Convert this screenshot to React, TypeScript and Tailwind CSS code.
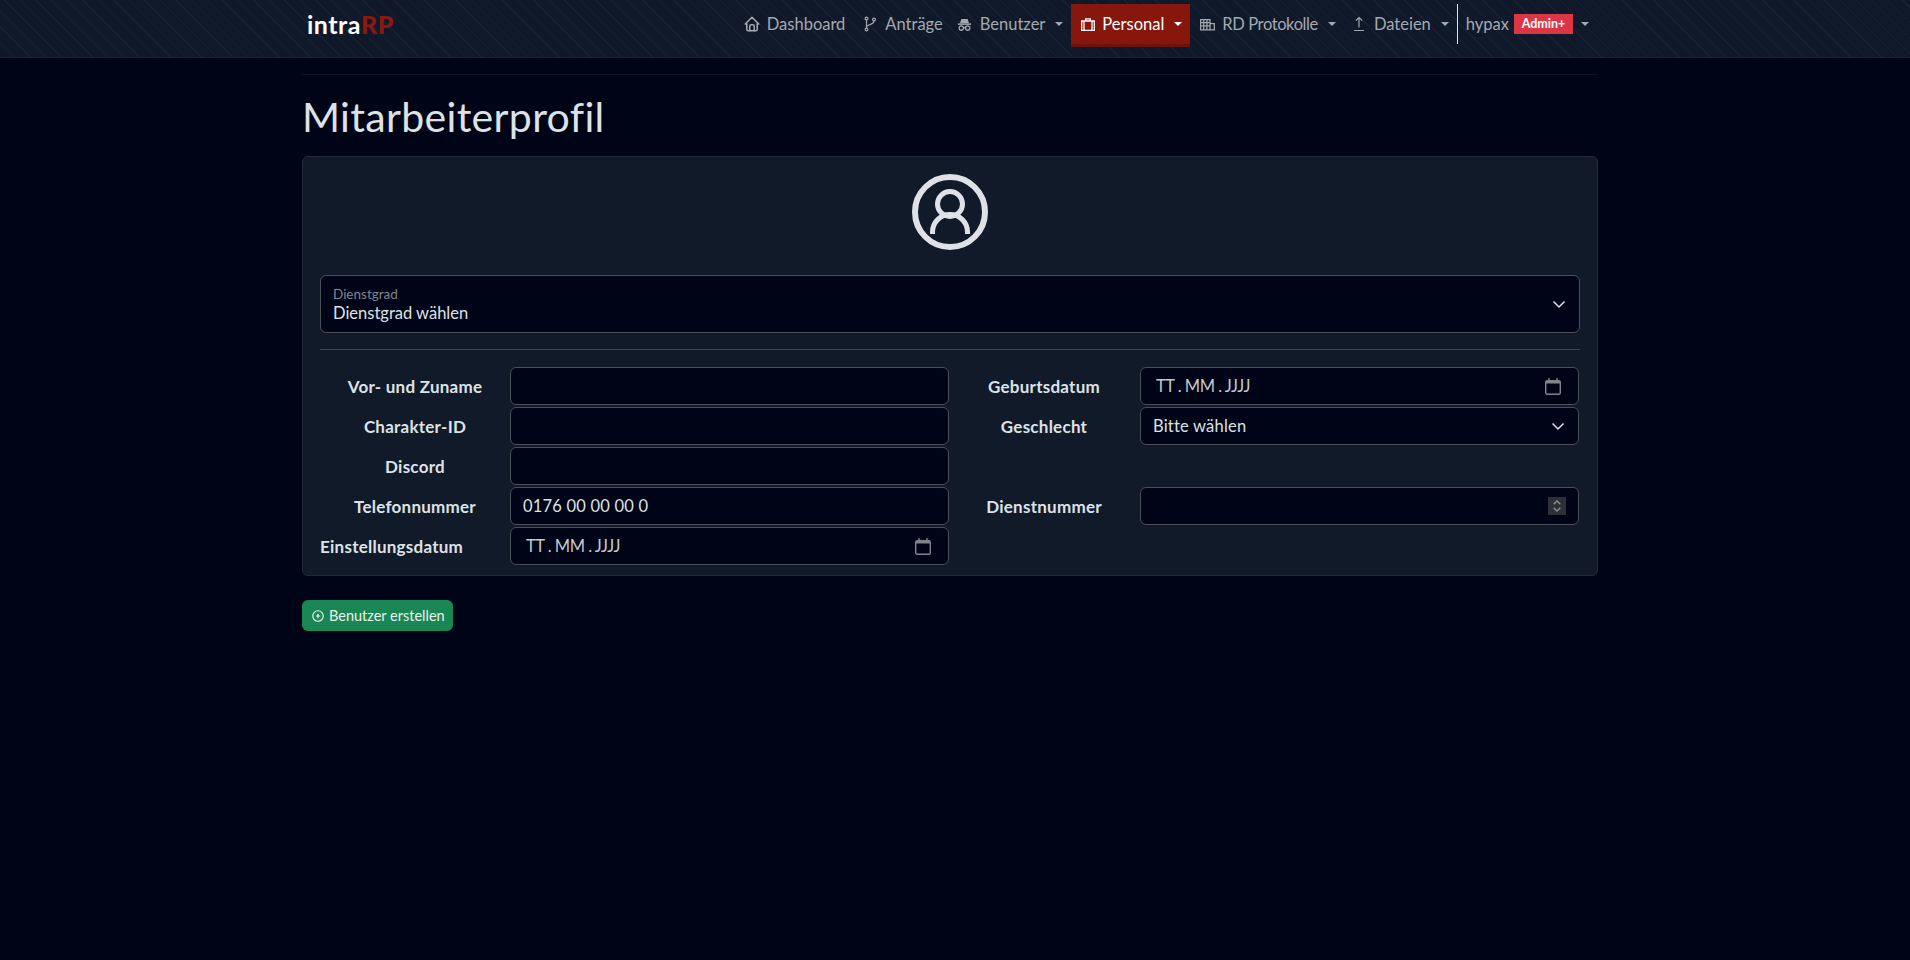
import { TbCirclePlus, TbHome } from "react-icons/tb";
import type { ReactNode } from "react";

function Caret({ white, className }: { white?: boolean; className?: string }) {
  return (
    <span
      className={`h-0 w-0 border-x-[4px] border-t-[4px] border-x-transparent ${className ?? "ml-[10px]"} ${white ? "border-t-white" : "border-t-[#a3a9b1]"}`}
    />
  );
}

function NavItem({ icon, label, caret, className, labelClass }: { icon: ReactNode; label: string; caret?: boolean; className?: string; labelClass?: string }) {
  return (
    <a className={`flex h-[40px] items-center text-[#a3a9b1] ${className ?? ""}`}>
      <span className="mr-[6px] flex w-[18px] justify-center text-[18px]">{icon}</span>
      <span className={labelClass}>{label}</span>
      {caret && <Caret />}
    </a>
  );
}

function BranchIcon() {
  return (
    <svg viewBox="0 0 16 16" className="h-[16px] w-[16px]" fill="none" stroke="currentColor" strokeWidth="1.2">
      <circle cx="4.5" cy="2.5" r="1.4" />
      <circle cx="4.5" cy="13.5" r="1.4" />
      <circle cx="12" cy="3.5" r="1.4" />
      <path d="M4.5 4v8M12 5c0 3.5-5 3-7.5 5.5" />
    </svg>
  );
}

function SpyIcon() {
  return (
    <svg viewBox="0 0 16 16" className="h-[15px] w-[15px]" fill="none" stroke="currentColor" strokeWidth="1.4">
      <path d="M3.2 6.6 4.6 2h6.8l1.4 4.6z" fill="currentColor" stroke="none" />
      <path d="M1 7.6h14" strokeWidth="1.6" />
      <circle cx="4.6" cy="11.8" r="2.3" />
      <circle cx="11.4" cy="11.8" r="2.3" />
      <path d="M6.9 11.5h2.2" />
    </svg>
  );
}

function SuitcaseIcon() {
  return (
    <svg viewBox="0 0 14 13" className="mr-[7px] h-[13px] w-[14px]" fill="none" stroke="currentColor" strokeWidth="1.3">
      <path d="M.7 3h12.6v9.3H.7zM3 3v9.3M11 3v9.3M4.7 3V.8h4.6V3" />
    </svg>
  );
}

function ProtocolIcon() {
  return (
    <svg viewBox="0 0 16 13" className="h-[13px] w-[15px]" fill="none" stroke="currentColor" strokeWidth="1.3">
      <path d="M.7 1.2h10v11h-10zM.7 4.5h10M.7 8h10M4 1.2v11M7.4 1.2v11M10.7 5.5h4.6v6.7h-4.6" />
    </svg>
  );
}

function UploadIcon() {
  return (
    <svg viewBox="0 0 16 16" className="h-[16px] w-[16px]" fill="none" stroke="currentColor" strokeWidth="1.2">
      <path d="M8 1.5v10M4.8 4.7 8 1.5l3.2 3.2M3 14.5h10" />
    </svg>
  );
}

function Chevron() {
  return (
    <svg viewBox="0 0 16 16" className="h-[16px] w-[16px]" fill="none" stroke="currentColor" strokeWidth="1.5">
      <path d="m2.5 5.5 5.5 5.5 5.5-5.5" />
    </svg>
  );
}

function CalendarIcon() {
  return (
    <svg viewBox="0 0 16 17" className="h-[17px] w-[16px] text-[#80858c]" fill="none" stroke="currentColor" strokeWidth="1.4">
      <rect x="0.7" y="2.7" width="14.6" height="13.6" rx="1.5" />
      <path d="M4 0v3M12 0v3" />
      <path d="M1 4.2h14" strokeWidth="2.6" />
    </svg>
  );
}

function UserCircleIcon() {
  return (
    <svg viewBox="0 0 76 76" className="h-[76px] w-[76px] text-[#dee2e6]" fill="none" stroke="currentColor">
      <circle cx="38" cy="38" r="35" strokeWidth="6" />
      <circle cx="38" cy="30" r="12.5" strokeWidth="5" />
      <path d="M20.5 60v-2a17.5 17.5 0 0 1 35 0v2" strokeWidth="5" />
    </svg>
  );
}

function Navbar() {
  return (
    <nav className="h-[58px] border-b border-[#1b2433] bg-[#101929] bg-[repeating-linear-gradient(45deg,transparent,transparent_10px,#182130_10px,#182130_11px)]">
      <div className="w-[1900px]">
        <div className="mx-auto flex h-[57px] w-[1296px] items-start justify-between">
          <div className="ml-[5px] mt-[12px] text-[25px] font-bold leading-none tracking-[0.5px] text-white">
            intra<span className="font-black text-[#8a1a10]">RP</span>
          </div>
          <div className="mr-[9px] flex items-start pt-[4px] text-[16.5px]">
            <NavItem icon={<TbHome />} label="Dashboard" className="mr-[16px]" />
            <NavItem icon={<BranchIcon />} label="Anträge" className="mr-[13px]" />
            <NavItem icon={<SpyIcon />} label="Benutzer" caret className="mr-[8px]" />
            <a className="flex h-[43px] w-[119px] items-center border-b-[3px] border-[#6e130b] bg-[#87170d] pl-[10px] text-white">
              <SuitcaseIcon />
              <span>Personal</span>
              <Caret white />
            </a>
            <NavItem icon={<ProtocolIcon />} label="RD Protokolle" labelClass="tracking-[-0.4px]" caret className="ml-[8px] mr-[14px]" />
            <NavItem icon={<UploadIcon />} label="Dateien" caret className="mr-[8px]" />
            <div className="flex h-[40px] items-center border-l border-[#dee2e6] pl-[8px] text-[#a3a9b1]">
              hypax
              <span className="ml-[5px] flex h-[20px] w-[59px] items-center justify-center bg-[#dc3545] text-[12.5px] font-bold text-white">Admin+</span>
              <Caret className="ml-[8px]" />
            </div>
          </div>
        </div>
      </div>
    </nav>
  );
}

const inputCls =
  "flex h-[38px] w-[439px] items-center rounded-[6px] border border-[#495057] bg-[#000417] text-[16.5px] tracking-[0.2px] text-[#dee2e6]";

const labelCls = "shrink-0 whitespace-nowrap pt-[1px] text-[17px] font-bold tracking-[0.25px] text-[#dee2e6]";

function Field({ label, left, children }: { label: string; left?: boolean; children: ReactNode }) {
  return (
    <div className="flex h-[38px] items-center">
      <label className={`${labelCls} w-[190px] ${left ? "text-left" : "text-center"}`}>{label}</label>
      {children}
    </div>
  );
}

function RightField({ label, children }: { label: string; children: ReactNode }) {
  return (
    <div className="ml-[-2px] flex h-[38px] items-center">
      <label className={`${labelCls} w-[192px] text-center`}>{label}</label>
      {children}
    </div>
  );
}

function DateBox() {
  return (
    <div className={`${inputCls} justify-between pl-[15px] pr-[17px]`}>
      <span className="tracking-[-0.5px] text-[#c5c9cd]">TT . MM . JJJJ</span>
      <CalendarIcon />
    </div>
  );
}

export default function App() {
  return (
    <div className="min-h-[960px] bg-[#000417] font-['Lato','Noto_Sans',sans-serif]">
      <Navbar />
      <div className="w-[1900px]">
        <main className="mx-auto w-[1296px] pt-[16px]">
          <hr className="border-[#0c1322]" />
          <h1 className="mb-[15px] mt-[18px] text-[41px] leading-[48px] tracking-[0.33px] text-[#dee2e6]">Mitarbeiterprofil</h1>
          <section className="h-[420px] rounded-[6px] border border-[#232b39] bg-[#101a29] px-[17px] pt-[17px]">
            <div className="flex justify-center">
              <UserCircleIcon />
            </div>
            <div className="mt-[25px] flex h-[58px] items-center justify-between rounded-[6px] border border-[#495057] bg-[#000417] pl-[12px] pr-[12px]">
              <div>
                <div className="text-[13.5px] leading-[18px] text-[#80858c]">Dienstgrad</div>
                <div className="text-[16.5px] leading-[20px] text-[#dee2e6]">Dienstgrad wählen</div>
              </div>
              <span className="text-[#dee2e6]"><Chevron /></span>
            </div>
            <hr className="mb-[17px] mt-[16px] border-[#3d444f]" />
            <div className="grid w-[1260px] grid-cols-2 gap-y-[2px]">
              <Field label="Vor- und Zuname"><input className={inputCls} /></Field>
              <RightField label="Geburtsdatum"><DateBox /></RightField>
              <Field label="Charakter-ID"><input className={inputCls} /></Field>
              <RightField label="Geschlecht">
                <div className={`${inputCls} justify-between pl-[12px] pr-[12px]`}>
                  <span>Bitte wählen</span>
                  <Chevron />
                </div>
              </RightField>
              <Field label="Discord"><input className={inputCls} /></Field>
              <div />
              <Field label="Telefonnummer">
                <div className={`${inputCls} pl-[12px]`}>0176 00 00 00 0</div>
              </Field>
              <RightField label="Dienstnummer">
                <div className={`${inputCls} justify-end pr-[12px]`}>
                  <span className="flex h-[18px] w-[18px] items-center justify-center bg-[#2f2f38] text-[#8d8d96]">
                    <svg viewBox="0 0 12 16" className="h-[14px] w-[10px]" fill="none" stroke="currentColor" strokeWidth="1.6">
                      <path d="M2 6l4-4 4 4M2 10l4 4 4-4" />
                    </svg>
                  </span>
                </div>
              </RightField>
              <Field label="Einstellungsdatum" left><DateBox /></Field>
            </div>
          </section>
          <button className="mt-[24px] flex h-[31px] w-[151px] items-center gap-[4px] rounded-[6px] bg-[#198754] pl-[9px] text-[14.5px] text-[#e8f3ed]">
            <TbCirclePlus className="text-[14px]" />
            Benutzer erstellen
          </button>
        </main>
      </div>
    </div>
  );
}
